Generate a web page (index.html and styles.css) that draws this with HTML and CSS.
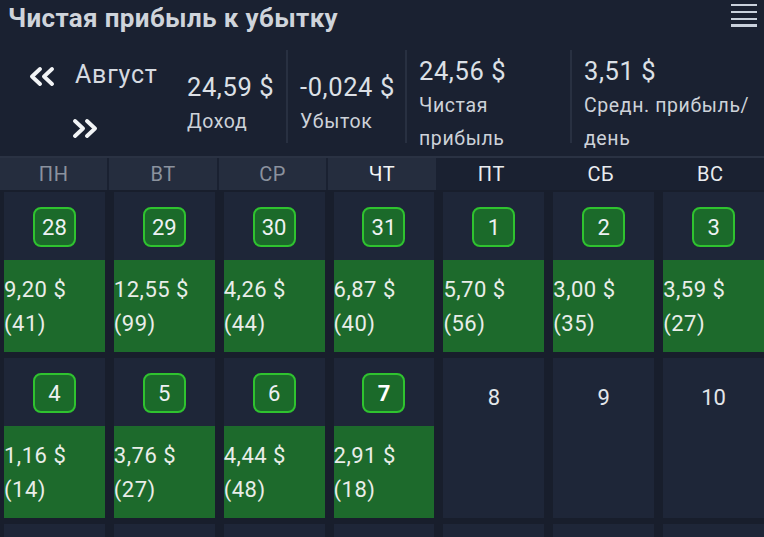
FILE: index.html
```html
<!DOCTYPE html>
<html lang="ru">
<head>
<meta charset="utf-8">
<link rel="stylesheet" href="styles.css">
</head>
<body>
<div class="page">
  <div class="titlebar">
    <h1 class="title">Чистая прибыль к убытку</h1>
    <div class="menu"><span></span><span></span><span></span><span></span></div>
  </div>
  <div class="stats">
    <div class="nav">
      <div class="nav-row">
        <svg class="chev" width="27" height="19" viewBox="0 0 27 19"><path d="M12 2 L4 9.5 L12 17 M24 2 L16 9.5 L24 17" fill="none" stroke="#f2f4f6" stroke-width="3.8" stroke-linecap="round" stroke-linejoin="round"/></svg>
        <span class="month">Август</span>
      </div>
      <div class="nav-row next">
        <svg class="chev" width="27" height="19" viewBox="0 0 27 19"><path d="M3 2 L11 9.5 L3 17 M15 2 L23 9.5 L15 17" fill="none" stroke="#f2f4f6" stroke-width="3.8" stroke-linecap="round" stroke-linejoin="round"/></svg>
      </div>
    </div>
    <div class="stat s1"><div class="val">24,59 $</div><div class="lbl">Доход</div></div>
    <div class="sep"></div>
    <div class="stat s2"><div class="val">-0,024 $</div><div class="lbl">Убыток</div></div>
    <div class="sep"></div>
    <div class="stat s3"><div class="val">24,56 $</div><div class="lbl">Чистая прибыль</div></div>
    <div class="sep"></div>
    <div class="stat s4"><div class="val">3,51 $</div><div class="lbl">Средн. прибыль/ день</div></div>
  </div>
  <div class="weekdays">
    <div class="wd past">ПН</div>
    <div class="wd past">ВТ</div>
    <div class="wd past">СР</div>
    <div class="wd cur">ЧТ</div>
    <div class="wd">ПТ</div>
    <div class="wd">СБ</div>
    <div class="wd">ВС</div>
  </div>
  <div class="grid">
    <div class="cell"><div class="badge">28</div><div class="amount">9,20 $<br>(41)</div></div>
    <div class="cell"><div class="badge">29</div><div class="amount">12,55 $<br>(99)</div></div>
    <div class="cell"><div class="badge">30</div><div class="amount">4,26 $<br>(44)</div></div>
    <div class="cell"><div class="badge">31</div><div class="amount">6,87 $<br>(40)</div></div>
    <div class="cell"><div class="badge">1</div><div class="amount">5,70 $<br>(56)</div></div>
    <div class="cell"><div class="badge">2</div><div class="amount">3,00 $<br>(35)</div></div>
    <div class="cell"><div class="badge">3</div><div class="amount">3,59 $<br>(27)</div></div>
    <div class="cell"><div class="badge">4</div><div class="amount">1,16 $<br>(14)</div></div>
    <div class="cell"><div class="badge">5</div><div class="amount">3,76 $<br>(27)</div></div>
    <div class="cell"><div class="badge">6</div><div class="amount">4,44 $<br>(48)</div></div>
    <div class="cell"><div class="badge today">7</div><div class="amount">2,91 $<br>(18)</div></div>
    <div class="cell"><div class="plain">8</div></div>
    <div class="cell"><div class="plain">9</div></div>
    <div class="cell"><div class="plain">10</div></div>
    <div class="cell"></div>
    <div class="cell"></div>
    <div class="cell"></div>
    <div class="cell"></div>
    <div class="cell"></div>
    <div class="cell"></div>
    <div class="cell"></div>
  </div>
</div>
</body>
</html>
```
FILE: styles.css
```css
* { box-sizing: border-box; }
html, body {
  margin: 0;
  padding: 0;
  background: #1a2131;
  font-family: Roboto, "Noto Sans", sans-serif;
  color: #dfe3e8;
  overflow: hidden;
}
.page {
  width: 764px;
  height: 537px;
  overflow: hidden;
}
.titlebar {
  height: 40px;
  display: flex;
  justify-content: space-between;
  align-items: flex-start;
  padding: 0 7px 0 8px;
}
.title {
  margin: 0;
  padding-top: 3px;
  font-size: 26px;
  line-height: 30px;
  font-weight: 700;
  letter-spacing: 0.35px;
  color: #cfd4db;
}
.menu {
  display: flex;
  flex-direction: column;
  gap: 4.4px;
  padding-top: 4px;
  width: 26px;
}
.menu span {
  display: block;
  height: 2.4px;
  background: #c9d1dc;
}
.stats {
  display: flex;
  align-items: center;
  padding: 13px 0 2px 28px;
  height: 118px;
  border-bottom: 2px solid #2a3243;
}
.nav {
  width: 159px;
  display: flex;
  flex-direction: column;
  gap: 30px;
  padding-bottom: 2px;
}
.nav-row {
  display: flex;
  align-items: center;
  gap: 20px;
  height: 22px;
}
.nav-row.next { padding-left: 44px; }
.month {
  font-size: 25px;
  letter-spacing: 0.8px;
  color: #d6dae0;
  position: relative;
  top: -2px;
}
.sep {
  align-self: flex-start;
  margin-top: -3px;
  width: 2px;
  height: 93px;
  background: #283041;
}
.stat { padding-left: 12px; }
.stat.s1 { padding-left: 0; width: 99px; }
.stat.s2 { width: 117px; }
.stat.s3 { width: 163px; }
.stat.s4 { flex: 1; }
.stat.s3 .lbl { max-width: 130px; }
.stat.s4 .lbl { max-width: 178px; }
.val {
  font-size: 25.5px;
  line-height: 36px;
  letter-spacing: 0.6px;
  color: #dce0e6;
}
.lbl {
  font-size: 19.5px;
  line-height: 33px;
  color: #cdd2d9;
  letter-spacing: 0.6px;
}
.weekdays {
  display: grid;
  grid-template-columns: repeat(7, 1fr);
  column-gap: 2px;
  height: 32px;
}
.wd {
  display: flex;
  align-items: center;
  justify-content: center;
  font-size: 20px;
  letter-spacing: 0.6px;
  color: #e9ecef;
}
.wd.past { background: #252d3e; color: #8b929e; }
.wd.cur { background: #252d3e; color: #f3f5f7; }
.grid {
  display: grid;
  grid-template-columns: repeat(7, 1fr);
  grid-auto-rows: 160px;
  column-gap: 9px;
  row-gap: 6px;
  padding: 2px 0 0 4px;
  background: #181e2c;
}
.cell {
  background: #1e2638;
  display: flex;
  flex-direction: column;
  align-items: center;
}
.badge {
  margin-top: 15px;
  width: 43px;
  height: 40px;
  border: 2px solid #2fc32f;
  border-radius: 8px;
  background: #1b6a2a;
  display: flex;
  align-items: center;
  justify-content: center;
  font-size: 22px;
  color: #eef1f3;
}
.badge.today { font-weight: 700; color: #ffffff; }
.plain {
  margin-top: 19px;
  height: 40px;
  display: flex;
  align-items: center;
  font-size: 22px;
  color: #e3e6ea;
}
.amount {
  margin-top: 13px;
  align-self: stretch;
  flex: 1;
  background: #1d6a2c;
  padding-top: 13px;
  font-size: 22px;
  line-height: 34px;
  letter-spacing: 0.5px;
  color: #e9ede9;
}
```
